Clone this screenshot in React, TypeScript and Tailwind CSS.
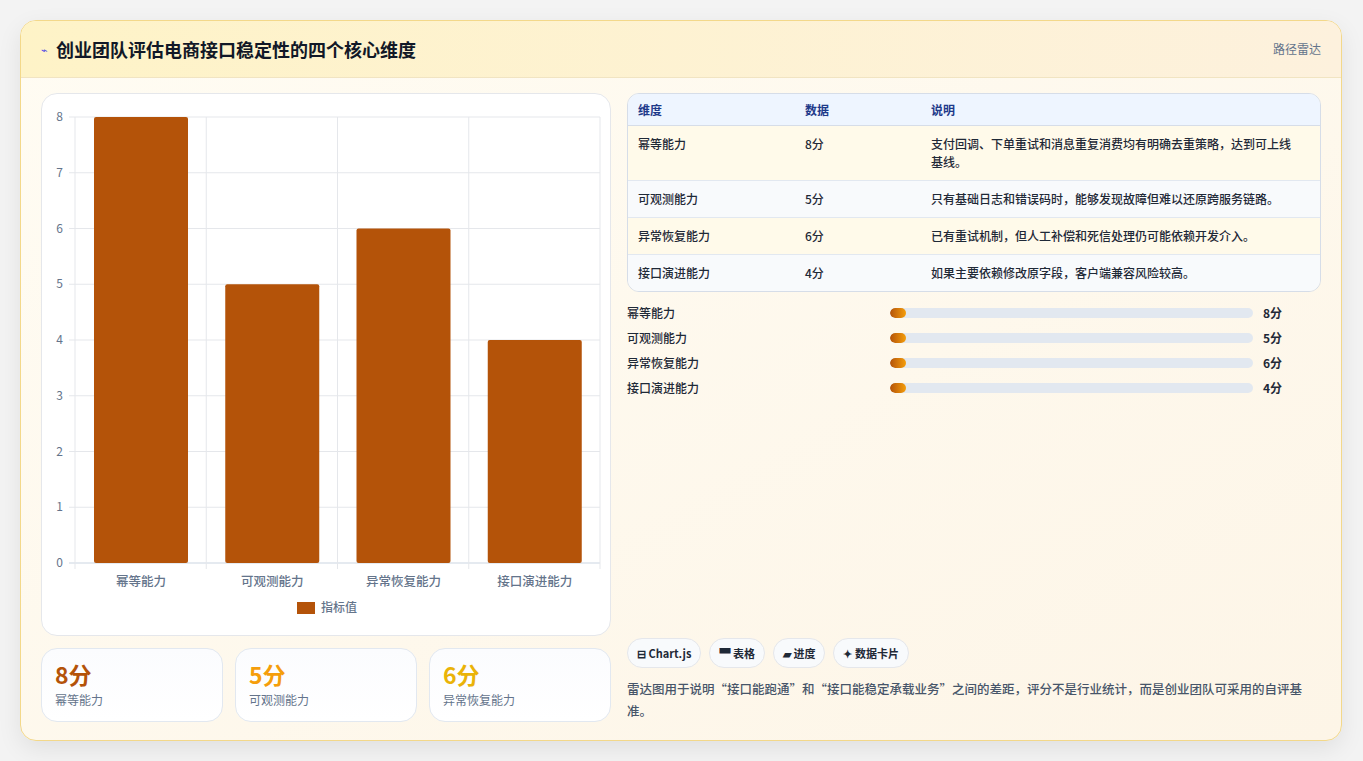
import React from "react"

const FONT = { fontFamily: '"Noto Sans CJK SC", "Noto Sans", sans-serif' }

const rows = [
  { name: "幂等能力", score: 8, desc: "支付回调、下单重试和消息重复消费均有明确去重策略，达到可上线基线。" },
  { name: "可观测能力", score: 5, desc: "只有基础日志和错误码时，能够发现故障但难以还原跨服务链路。" },
  { name: "异常恢复能力", score: 6, desc: "已有重试机制，但人工补偿和死信处理仍可能依赖开发介入。" },
  { name: "接口演进能力", score: 4, desc: "如果主要依赖修改原字段，客户端兼容风险较高。" },
]

function BarChart() {
  const left = 33
  const right = 558
  const top = 23
  const bottom = 469
  const step = (bottom - top) / 8
  const cw = (right - left) / 4
  return (
    <svg width="570" height="543" viewBox="0 0 570 543" style={FONT}>
      {Array.from({ length: 9 }).map((_, i) => {
        const y = bottom - i * step
        return (
          <g key={i}>
            <line x1={left - 6} x2={right} y1={y} y2={y} stroke={i === 0 ? "#cbd5e1" : "#e5e7eb"} />
            <text x={left - 12} y={y + 4} fontSize="12" fill="#64748b" textAnchor="end">{i}</text>
          </g>
        )
      })}
      {Array.from({ length: 5 }).map((_, i) => (
        <line key={i} x1={left + i * cw} x2={left + i * cw} y1={top} y2={bottom + 6} stroke="#e5e7eb" />
      ))}
      {rows.map((r, i) => {
        const h = r.score * step
        const x = left + i * cw + 19
        return (
          <g key={r.name}>
            <rect x={x} y={bottom - h} width={94} height={h} fill="#b45309" rx="2" />
            <text x={x + 47} y={492} fontSize="12.5" fill="#64748b" textAnchor="middle" fontWeight="500">{r.name}</text>
          </g>
        )
      })}
      <rect x={255} y={508} width={18} height={12} fill="#b45309" />
      <text x={279} y={518} fontSize="12" fill="#64748b" fontWeight="500">指标值</text>
    </svg>
  )
}

export default function App() {
  return (
    <div className="min-h-[761px] bg-[#f3f3f3] pt-[20px] px-[20px] pb-[20px]" style={FONT}>
      <div className="w-[1322px] h-[721px] rounded-2xl border border-[#f3d88a] bg-gradient-to-br from-[#fffcf3] to-[#fdf5e7] shadow-[0_8px_24px_rgba(0,0,0,0.08)] overflow-hidden flex flex-col">
        <div className="h-[57px] shrink-0 flex items-center justify-between px-5 bg-gradient-to-r from-[#fef3c7] to-[#fdf1dd] border-b border-[#f1e4c2]">
          <div className="flex items-center gap-2">
            <span className="text-[11px] text-[#4f46e5]">⌁</span>
            <h1 className="text-[18px] font-bold text-[#111827]">创业团队评估电商接口稳定性的四个核心维度</h1>
          </div>
          <span className="text-[12px] text-[#64748b]">路径雷达</span>
        </div>
        <div className="flex-1 flex gap-4 px-5 pt-[15px] pb-[18px]">
          <div className="w-[570px] flex flex-col gap-3">
            <div className="h-[543px] rounded-2xl bg-white border border-[#e5e7eb]">
              <BarChart />
            </div>
            <div className="grid grid-cols-3 gap-[12px]">
              {[
                ["8分", "幂等能力", "text-[#b45309]"],
                ["5分", "可观测能力", "text-[#f59e0b]"],
                ["6分", "异常恢复能力", "text-[#eab308]"],
              ].map(([v, l, c]) => (
                <div key={l} className="h-[74px] rounded-2xl border border-[#e2e8f0] bg-gradient-to-b from-[#fbfcfe] to-white px-[13px] pt-[10px]">
                  <div className={`text-[23px] font-bold leading-[30px] ${c}`}>{v}</div>
                  <div className="text-[12px] text-[#64748b] mt-[2px]">{l}</div>
                </div>
              ))}
            </div>
          </div>
          <div className="flex-1 flex flex-col">
            <div className="rounded-xl border border-[#d6dde8] overflow-hidden text-[12px]">
              <div className="grid grid-cols-[167px_126px_1fr] h-[32px] items-center bg-[#eef5ff] text-[#1e3a8a] font-semibold px-[10px] border-b border-[#d6dde8]">
                <div>维度</div><div>数据</div><div>说明</div>
              </div>
              {rows.map((r, i) => (
                <div key={r.name} className={`grid grid-cols-[167px_126px_1fr] px-[10px] py-[9px] text-[#1f2937] font-medium leading-[18px] ${i < 3 ? "border-b border-[#e2e8f0]" : ""} ${i % 2 === 0 ? "bg-[#fffaea]" : "bg-[#f8fafc]"}`}>
                  <div>{r.name}</div>
                  <div>{r.score}分</div>
                  <div className="pr-4">{r.desc}</div>
                </div>
              ))}
            </div>
            <div className="mt-[12px] flex flex-col gap-[7px]">
              {rows.map((r) => (
                <div key={r.name} className="flex items-center h-[18px] text-[12px] font-medium text-[#1f2937]">
                  <div className="w-[263px]">{r.name}</div>
                  <div className="w-[363px] h-[10px] rounded-full bg-[#e2e8f0] overflow-hidden">
                    <div className="h-full w-[16px] rounded-full bg-gradient-to-r from-[#b45309] to-[#f59e0b]" />
                  </div>
                  <div className="ml-[10px] font-bold">{r.score}分</div>
                </div>
              ))}
            </div>
            <div className="mt-auto flex gap-2">
              {["⊟ Chart.js", "▀ 表格", "▰ 进度", "✦ 数据卡片"].map((t) => (
                <span key={t} className="h-[30px] px-[9px] flex items-center rounded-full bg-[#f8fafc] border border-[#e5e7eb] text-[11px] font-semibold text-[#1f2937]">{t}</span>
              ))}
            </div>
            <p className="mt-[10px] text-[12.5px] leading-[22px] text-[#475569] font-medium">
              雷达图用于说明“接口能跑通”和“接口能稳定承载业务”之间的差距，评分不是行业统计，而是创业团队可采用的自评基准。
            </p>
          </div>
        </div>
      </div>
    </div>
  )
}
